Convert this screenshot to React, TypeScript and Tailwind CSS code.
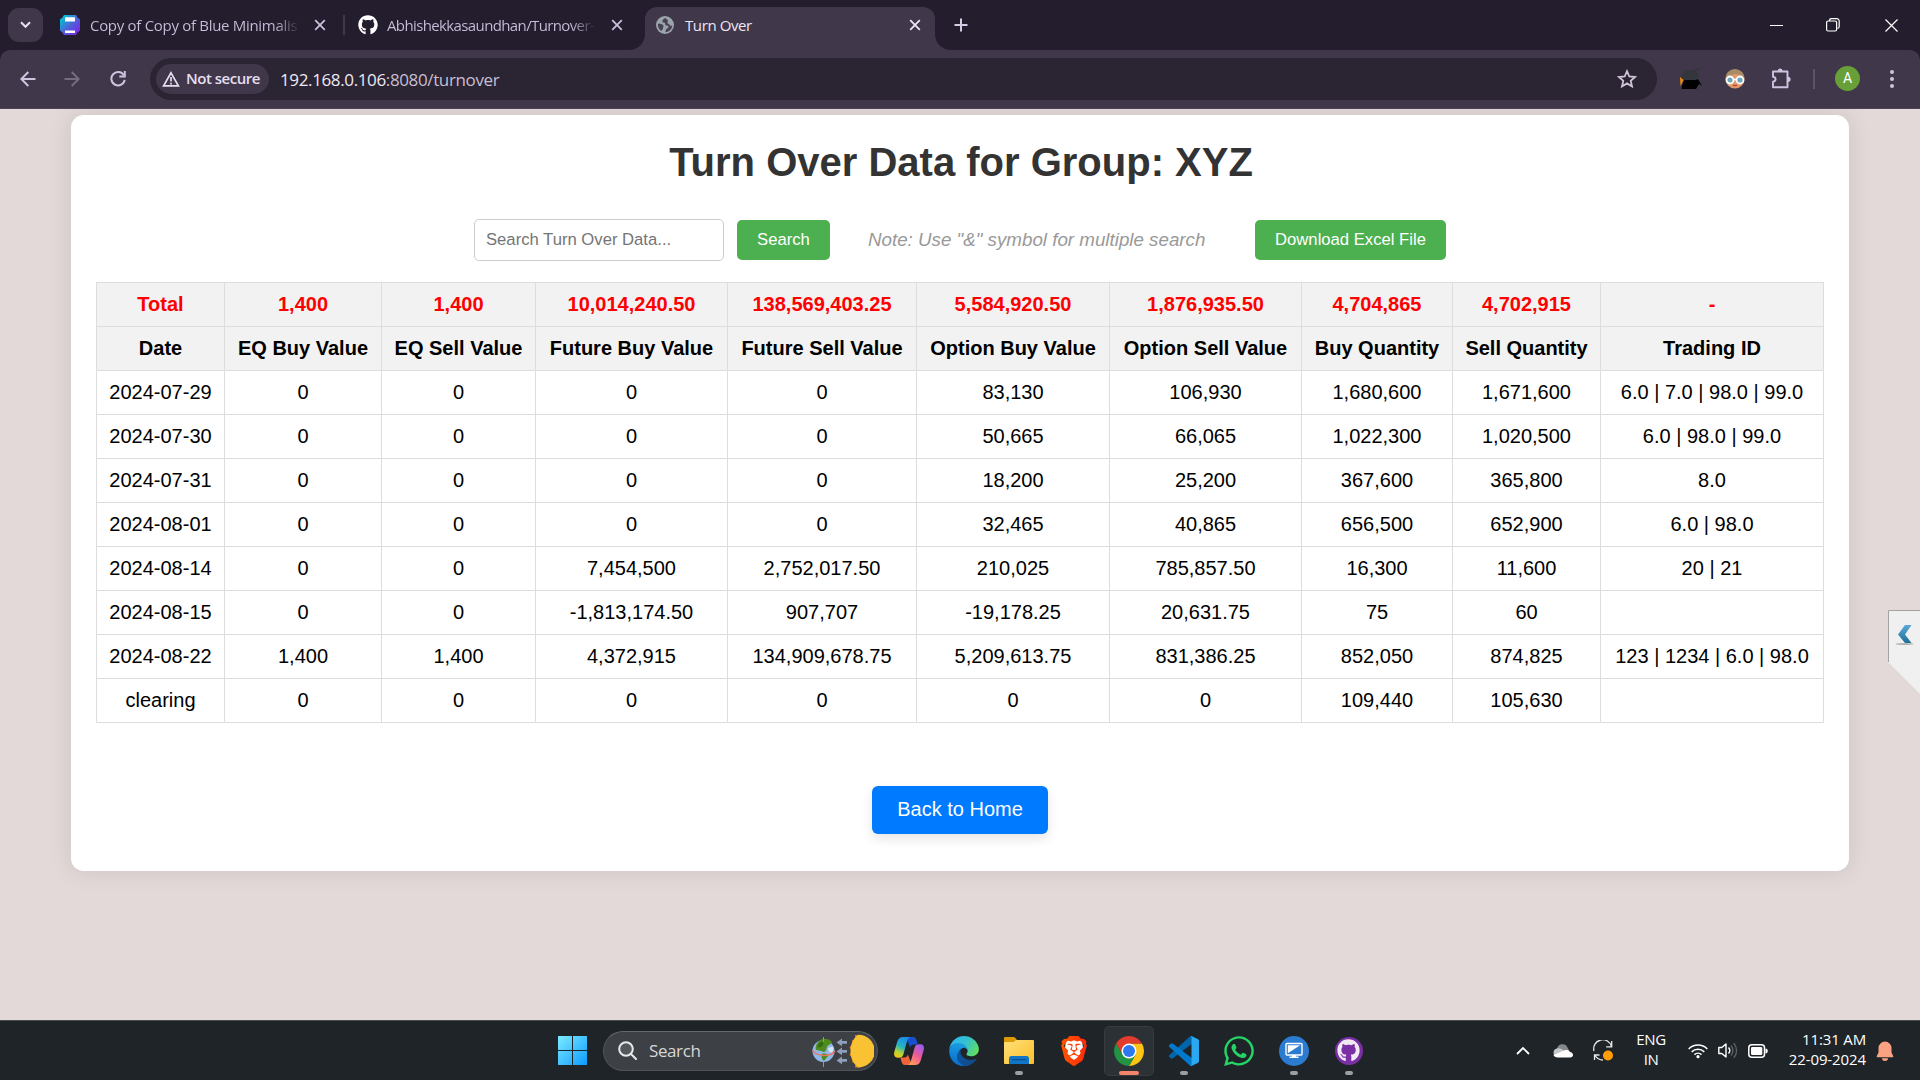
import React from "react";
import { SiBrave } from "react-icons/si";
import { FaGithub, FaWhatsapp } from "react-icons/fa";

const columns = [
  "Date",
  "EQ Buy Value",
  "EQ Sell Value",
  "Future Buy Value",
  "Future Sell Value",
  "Option Buy Value",
  "Option Sell Value",
  "Buy Quantity",
  "Sell Quantity",
  "Trading ID",
];

const totals = ["Total", "1,400", "1,400", "10,014,240.50", "138,569,403.25", "5,584,920.50", "1,876,935.50", "4,704,865", "4,702,915", "-"];

const rows = [
  ["2024-07-29", "0", "0", "0", "0", "83,130", "106,930", "1,680,600", "1,671,600", "6.0 | 7.0 | 98.0 | 99.0"],
  ["2024-07-30", "0", "0", "0", "0", "50,665", "66,065", "1,022,300", "1,020,500", "6.0 | 98.0 | 99.0"],
  ["2024-07-31", "0", "0", "0", "0", "18,200", "25,200", "367,600", "365,800", "8.0"],
  ["2024-08-01", "0", "0", "0", "0", "32,465", "40,865", "656,500", "652,900", "6.0 | 98.0"],
  ["2024-08-14", "0", "0", "7,454,500", "2,752,017.50", "210,025", "785,857.50", "16,300", "11,600", "20 | 21"],
  ["2024-08-15", "0", "0", "-1,813,174.50", "907,707", "-19,178.25", "20,631.75", "75", "60", ""],
  ["2024-08-22", "1,400", "1,400", "4,372,915", "134,909,678.75", "5,209,613.75", "831,386.25", "852,050", "874,825", "123 | 1234 | 6.0 | 98.0"],
  ["clearing", "0", "0", "0", "0", "0", "0", "109,440", "105,630", ""],
];

const columnWidths = [128, 157, 154, 192, 189, 193, 192, 151, 148, 223];

function TabClose({ color }: { color: string }) {
  return (
    <svg width="12" height="12" viewBox="0 0 12 12" className="shrink-0" stroke={color} strokeWidth="1.8">
      <path d="M1.2 1.2l9.6 9.6M10.8 1.2l-9.6 9.6" />
    </svg>
  );
}

function CanvaIcon() {
  return (
    <svg width="20" height="20" viewBox="0 0 20 20" className="shrink-0">
      <defs>
        <linearGradient id="canva" x1="0" y1="0" x2="1" y2="1">
          <stop offset="0.1" stopColor="#04c2d2" />
          <stop offset="0.5" stopColor="#4a66d8" />
          <stop offset="1" stopColor="#8a17ee" />
        </linearGradient>
      </defs>
      <path d="M4 0h12l1.500 2.500L20 4.500v11L17.500 17.500 16 20H4l-1.500-2.500L0 15.500v-11L2.500 2.500z" fill="url(#canva)" />
      <rect x="5" y="2.200" width="10" height="4.300" rx="0.5" fill="#fff" />
      <rect x="5" y="15.500" width="10" height="2.500" rx="0.5" fill="#fff" />
    </svg>
  );
}

function GlobeIcon() {
  return (
    <svg width="18" height="18" viewBox="0 0 18 18" className="shrink-0">
      <circle cx="9" cy="9" r="9" fill="#9aa5ab" />
      <path
        d="M9.600 1.900C7.500 2.500 6.800 3.600 6.500 4.700c-.3 1 .1 1.800 1.200 1.900 1.100.1 1.500.6 1.500 1.500 0 1.100.6 1.500 1.700 1.500 1.600 0 2 .7 1.300 1.800-.6 1-1.500 1.200-2.300 2.300-.5.8-.4 1.800-.1 2.600 3.400-.3 6.300-3.200 6.500-6.700-1 .5-2.100.2-2.500-.7-.4-1-1.300-1-1.900-1.500-.8-.8-.2-1.700.1-2.400.3-.9-.7-1.600-1.400-1.800z"
        fill="#4a4254"
      />
      <path d="M1.900 7.800c1.700-.2 4.300.1 5.200 1.200 1 1.200-.1 2.300-.2 3.600-.1.900-.9 1.600-1.600 2.400C3 13.700 1.600 10.800 1.900 7.800z" fill="#4a4254" />
    </svg>
  );
}

function TabStrip() {
  return (
    <div className="flex h-[50px] items-center bg-[#241d2e] pl-2 text-[15px] tracking-[-0.3px]">
      <div className="flex h-[34px] w-[35px] shrink-0 items-center justify-center rounded-[11px] bg-[#40374b]">
        <svg width="11" height="8" viewBox="0 0 11 8" fill="none" stroke="#e6dff0" strokeWidth="2">
          <path d="M1 1.300l4.500 4.500L10 1.300" />
        </svg>
      </div>
      <div className="ml-[17px] flex w-[266px] shrink-0 items-center">
        <CanvaIcon />
        <span className="ml-[10px] w-[210px] overflow-hidden bg-linear-to-r from-[#cabfdc] from-88% to-transparent bg-clip-text whitespace-nowrap text-transparent">
          Copy of Copy of Blue Minimalis
        </span>
        <span className="ml-[14px] flex">
          <TabClose color="#cabfdc" />
        </span>
      </div>
      <div className="ml-[17px] h-5 w-[2px] shrink-0 bg-[#40374b]" />
      <div className="ml-[13px] flex w-[265px] shrink-0 items-center">
        <FaGithub className="size-[20px] shrink-0 text-white" />
        <span className="ml-[9px] w-[210px] overflow-hidden bg-linear-to-r from-[#cabfdc] from-88% to-transparent bg-clip-text tracking-[-0.62px] whitespace-nowrap text-transparent">
          Abhishekkasaundhan/Turnover-
        </span>
        <span className="ml-[15px] flex">
          <TabClose color="#cabfdc" />
        </span>
      </div>
      <div className="relative ml-[22px] flex h-[43px] w-[290px] shrink-0 items-center self-end rounded-t-[12px] bg-[#40374b] pb-[7px] pl-[11px]">
        <svg width="16" height="16" viewBox="0 0 16 16" className="absolute bottom-0 -left-4" fill="#40374b">
          <path d="M16 0v16H0C9 16 16 9 16 0z" />
        </svg>
        <svg width="16" height="16" viewBox="0 0 16 16" className="absolute -right-4 bottom-0" fill="#40374b">
          <path d="M0 0v16h16C7 16 0 9 0 0z" />
        </svg>
        <GlobeIcon />
        <span className="ml-[11px] w-[224px] tracking-[-0.4px] text-[#ece6f4]">Turn Over</span>
        <TabClose color="#ece6f4" />
      </div>
      <svg width="14" height="14" viewBox="0 0 14 14" className="ml-[19px]" stroke="#d6cbe6" strokeWidth="2">
        <path d="M7 0.500v13M0.500 7h13" />
      </svg>
      <div className="ml-auto flex items-center pr-[22px]">
        <div className="h-px w-[13px] bg-white" />
        <svg width="14" height="14" viewBox="0 0 14 14" className="ml-[43px]" fill="none" stroke="#fff" strokeWidth="1.200">
          <rect x="0.600" y="3" width="10" height="10" rx="1.500" />
          <path d="M3.500 3V2.500A1.800 1.800 0 0 1 5.300 0.700h5.400a2.500 2.500 0 0 1 2.500 2.500v5.400a1.800 1.800 0 0 1-1.800 1.800" />
        </svg>
        <svg width="13" height="13" viewBox="0 0 13 13" className="ml-[45px]" stroke="#fff" strokeWidth="1.200">
          <path d="M0.500 0.500l12 12M12.500 0.500l-12 12" />
        </svg>
      </div>
    </div>
  );
}

function Toolbar() {
  return (
    <div className="bg-[#241d2e]">
      <div className="flex h-[59px] items-center rounded-t-[10px] border-b border-[#4d4351] bg-[#40374b] pr-[26px] pb-px pl-5">
        <svg width="16" height="16" viewBox="0 0 16 16" fill="none" stroke="#cfc4e0" strokeWidth="2">
          <path d="M15.500 8H1.500M8.300 1L1.400 8l6.900 7" />
        </svg>
        <svg width="16" height="16" viewBox="0 0 16 16" className="ml-[28px]" fill="none" stroke="#756c80" strokeWidth="2">
          <path d="M0.500 8h14M7.700 1l6.900 7-6.900 7" />
        </svg>
        <svg width="16" height="18" viewBox="0 0 16 18" className="ml-[30px]" fill="none" stroke="#cfc4e0" strokeWidth="2">
          <path d="M13.800 5.200A6.700 6.700 0 1 0 14.700 9.800" />
          <path d="M14.800 1v5.500H9.300" />
        </svg>
        <div className="ml-6 flex h-[42px] w-[1507px] items-center rounded-full bg-[#2b2433] pr-[20px] pl-[6px]">
          <div className="flex h-[30px] w-[113px] items-center rounded-full bg-[#40374b] pl-[6px]">
            <svg width="18" height="16" viewBox="0 0 18 16" fill="none" stroke="#e6dff0" strokeWidth="1.700">
              <path d="M9 1.800l7.400 13H1.600z" />
              <path d="M9 6v4.500M9 11.700v1.700" />
            </svg>
            <span className="ml-[6px] text-[15px] font-semibold tracking-[-0.5px] whitespace-nowrap text-[#e6dff0]">Not secure</span>
          </div>
          <span className="ml-[11px] pt-[2px] text-[17px] tracking-[-0.37px] whitespace-nowrap text-[#c7bfd0]">
            <span className="text-[#eee9f4]">192.168.0.106</span>:8080/turnover
          </span>
          <svg width="20" height="19" viewBox="0 0 20 19" className="ml-auto" fill="none" stroke="#cfc4d8" strokeWidth="1.800">
            <path d="M10 2.200l2.300 5.300 5.700.5-4.300 3.800 1.300 5.600-5-3-5 3 1.300-5.600L2 8l5.700-.5z" />
          </svg>
        </div>
        <svg width="22" height="21" viewBox="0 0 22 21" className="ml-[23px]">
          <path d="M4 2.500c3-2 4 .5 8 0 3-.5 6-3.500 9-1.500l-.5 1.500c-3-1-3 1-6 2H17l1.500 4L16 12H3.500L0 9l3-3 .5-1.500c2-1 .5-1 .5-2z" fill="#33363a" />
          <path d="M0 9l3.500 3-3 6z" fill="#f08a10" />
          <path d="M4 12h12l2-1 4 7-3-2-3 5H2c-1-1 0-2 0-3z" fill="#000" />
        </svg>
        <svg width="20" height="20" viewBox="0 0 20 20" className="ml-[23px]">
          <circle cx="10" cy="10" r="9.500" fill="#e0986c" />
          <path d="M.5 9.500A9.500 9.500 0 0 1 19.500 9.500C16 7 14 5 9 5 6 7 3 8 .5 9.500z" fill="#a98c66" />
          <circle cx="5" cy="11" r="3.500" fill="#6fa6b5" stroke="#fff" strokeWidth="1.800" />
          <circle cx="15" cy="11" r="3.500" fill="#6fa6b5" stroke="#fff" strokeWidth="1.800" />
          <path d="M8.500 10.500h3" stroke="#fff" strokeWidth="1.500" />
          <path d="M8 16.500h4" stroke="#b8452f" strokeWidth="1.300" />
        </svg>
        <svg width="21" height="21" viewBox="0 0 21 21" className="ml-[26px]">
          <path
            d="M2 3.500h14.500v15.700H2v-5.400c3.400-.5 3.400-4.500 0-5z"
            fill="none"
            stroke="#cfc4e0"
            strokeWidth="1.900"
            strokeLinejoin="round"
          />
          <path d="M6.700 3a2.500 2.500 0 0 1 5 0zM17 8.700a2.600 2.600 0 0 1 0 5.200z" fill="#cfc4e0" />
        </svg>
        <div className="ml-[21px] h-5 w-[2px] bg-[#5d5369]" />
        <div className="ml-5 flex size-[25px] items-center justify-center rounded-full bg-[#689f38] font-[Roboto] text-[14px] text-white">A</div>
        <svg width="4" height="18" viewBox="0 0 4 18" className="ml-auto" fill="#cfc4e0">
          <circle cx="2" cy="2" r="2" />
          <circle cx="2" cy="9" r="2" />
          <circle cx="2" cy="16" r="2" />
        </svg>
      </div>
    </div>
  );
}

function TurnoverPage() {
  return (
    <div className="relative flex-1 overflow-hidden bg-[#e2d9d8] px-[71px] pt-[6px] font-['Liberation_Sans',sans-serif]">
      <div className="flex h-[756px] flex-col items-center rounded-[12.500px] bg-white px-[25px] shadow-[0_0_25px_rgba(0,0,0,0.1)]">
        <h1 className="mt-[24px] pl-[2px] text-[40px] leading-[46px] font-bold text-[#333]">Turn Over Data for Group: XYZ</h1>
        <div className="mt-[34px] flex h-[42px] items-center text-[16.667px]">
          <input
            type="text"
            placeholder="Search Turn Over Data..."
            className="h-[42px] w-[250px] rounded-[5px] border border-[#ccc] px-[11px] placeholder:text-[#757575]"
          />
          <button className="ml-[13px] h-10 w-[93px] rounded-[5px] bg-[#4caf50] pb-[2px] text-white">Search</button>
          <span className="ml-[38px] w-[337px] text-[18.750px] whitespace-nowrap text-[#999] italic">
            Note: Use "&amp;" symbol for multiple search
          </span>
          <button className="ml-[50px] h-10 w-[191px] rounded-[5px] bg-[#4caf50] pb-[2px] text-white">Download Excel File</button>
        </div>
        <table className="mt-[21px] w-[1728px] table-fixed border-collapse text-center text-[20px] leading-[23px] text-black">
          <colgroup>
            {columnWidths.map((w, i) => (
              <col key={i} style={{ width: w }} />
            ))}
          </colgroup>
          <thead className="bg-[#f2f2f2]">
            <tr className="h-[44px] text-[#f00]">
              {totals.map((v, i) => (
                <th key={i} className="border border-[#ddd] p-0 whitespace-nowrap">
                  {v}
                </th>
              ))}
            </tr>
            <tr className="h-[44px]">
              {columns.map((v) => (
                <th key={v} className="border border-[#ddd] p-0 whitespace-nowrap">
                  {v}
                </th>
              ))}
            </tr>
          </thead>
          <tbody>
            {rows.map((row) => (
              <tr key={row[0]} className="h-[44px]">
                {row.map((v, i) => (
                  <td key={i} className="border border-[#ddd] p-0 whitespace-nowrap">
                    {v}
                  </td>
                ))}
              </tr>
            ))}
          </tbody>
        </table>
        <button className="mt-[63px] h-12 w-[176px] rounded-[6px] bg-[#007bff] pb-[2px] text-[20px] text-white shadow-[0_5px_12px_rgba(0,0,0,0.1)]">
          Back to Home
        </button>
      </div>
      <svg width="32" height="84" viewBox="0 0 32 84" className="absolute top-[501px] right-0">
        <defs>
          <linearGradient id="arrow" x1="0" y1="0" x2="0" y2="1">
            <stop offset="0" stopColor="#5aa9da" />
            <stop offset="1" stopColor="#1f6f9b" />
          </linearGradient>
        </defs>
        <path d="M0 0h32v84L0 52z" fill="#f0f0f0" />
        <path d="M0.500 52V0.500H32" fill="none" stroke="#a3a3a3" />
        <ellipse cx="16.500" cy="34" rx="9" ry="1" fill="#b5b5b5" />
        <path d="M17 15h6.500l-6.500 9.500 6.500 8.500H17l-7-8.500z" fill="url(#arrow)" />
      </svg>
    </div>
  );
}

function WindowsIcon() {
  return (
    <svg width="29" height="29" viewBox="0 0 29 29" className="shrink-0">
      <defs>
        <linearGradient id="win" x1="0" y1="0" x2="1" y2="1" gradientUnits="objectBoundingBox">
          <stop offset="0" stopColor="#7cecff" />
          <stop offset="1" stopColor="#0c9aff" />
        </linearGradient>
      </defs>
      <path d="M0 .5Q0 0 .5 0H14v14H0zM15 0h13.500q.5 0 .5.500V14H15zM0 15h14v14H.5Q0 29 0 28.500zM15 15h14v13.500q0 .5-.5.500H15z" fill="url(#win)" />
    </svg>
  );
}

function EquinoxArt() {
  return (
    <svg width="63" height="34" viewBox="0 0 63 34" className="shrink-0">
      <circle cx="12.500" cy="17" r="11" fill="#8fb8e8" />
      <path d="M8 7c3-3 10-3 13 1-1 3-4 2-5 5-1 2 0 4-3 5-3-1-5-2-8-2-1-4 1-7 3-9zM11 20c3-1 6 0 6 2-1 2-3 3-4 5-2-1-3-5-2-7z" fill="#4f8a1e" />
      <path d="M10 8c2-1 3 1 2 3s-4 3-5 2 1-4 3-5z" fill="#356b12" />
      <path d="M17 14c2 0 3-2 5-1 1 2 0 5-2 6-2-1-3-3-3-5z" fill="#d6e6fa" />
      <path d="M1.500 16c3 6 17 8 22.500 1" fill="none" stroke="#f2705c" strokeWidth="1.300" />
      <path d="M12.500 3v5M12.500 28v5" stroke="#f2705c" strokeWidth="1" />
      <path d="M31 7v-2.500l-5.500 3.900 5.500 3.800V9.800h5V7zM31 16v-2.500l-5.500 3.900 5.500 3.800v-2.400h5V16zM31 25v-2.500l-5.500 3.900 5.500 3.800v-2.400h5V25z" fill="#8d9fba" />
      <path d="M49 1h-5l.5 4-3.500 1.500L42 10l-3.500 3L40.500 17l-2 4L42 24l-1 4 3.500 1.500L44 33.500h5z" fill="#e8801a" />
      <path d="M47.500 .8a16.200 16.200 0 0 1 0 32.600C41 29 39.500 22 39.500 17S41 5 47.500.8z" fill="#f9c232" />
    </svg>
  );
}

function CopilotIcon() {
  return (
    <svg width="30" height="28" viewBox="0 0 30 28">
      <defs>
        <linearGradient id="cpA" x1="0.600" y1="0" x2="0.200" y2="1">
          <stop offset="0" stopColor="#1b8fe8" />
          <stop offset="0.450" stopColor="#25b5c4" />
          <stop offset="0.750" stopColor="#b8d432" />
          <stop offset="1" stopColor="#f5c216" />
        </linearGradient>
        <linearGradient id="cpB" x1="0.800" y1="0" x2="0.200" y2="1">
          <stop offset="0" stopColor="#9a5cf0" />
          <stop offset="0.500" stopColor="#ee5a98" />
          <stop offset="1" stopColor="#ffa052" />
        </linearGradient>
      </defs>
      <path d="M12 0h7c2.500 0 3 2 3.700 4l1 3.500h-4c-2 0-3 1-3.600 3L14 5z" fill="#1750d0" />
      <path d="M18 28h-7c-2.500 0-3-2-3.700-4l-1-3.500h4c2 0 3-1 3.600-3L16 23z" fill="#f0633a" />
      <path d="M9 0h7c-2 1-2.800 3.500-3.500 6l-3 11c-.8 2.800-2 3.700-4.500 3.700H3.500C.5 20.700-.4 18 .3 15l3-10.500C4.200 1.500 6 0 9 0z" fill="url(#cpA)" />
      <path d="M21 28h-7c2-1 2.800-3.500 3.500-6l3-11c.8-2.800 2-3.700 4.500-3.700h1.500c3 0 3.900 2.700 3.200 5.700l-3 10.500C25.800 26.500 24 28 21 28z" fill="url(#cpB)" />
    </svg>
  );
}

function EdgeIcon() {
  return (
    <svg width="30" height="30" viewBox="4 0 257 259">
      <defs>
        <linearGradient id="edA" x1="0" y1="0" x2="1" y2="0.600">
          <stop offset="0" stopColor="#0c59a4" />
          <stop offset="1" stopColor="#114a8b" />
        </linearGradient>
        <linearGradient id="edB" x1="0.600" y1="0" x2="0.400" y2="1">
          <stop offset="0" stopColor="#1ba0e2" />
          <stop offset="1" stopColor="#0a6ccc" />
        </linearGradient>
        <linearGradient id="edC" x1="0" y1="0.300" x2="1" y2="0.700">
          <stop offset="0" stopColor="#2fb4ee" />
          <stop offset="0.500" stopColor="#35c1cf" />
          <stop offset="1" stopColor="#62e05a" />
        </linearGradient>
      </defs>
      <path
        fill="url(#edA)"
        d="M235.68 195.46a93.73 93.73 0 0 1-10.54 4.71 101.87 101.87 0 0 1-35.9 6.46c-47.32 0-88.54-32.55-88.54-74.32A31.48 31.48 0 0 1 117.13 105c-42.8 1.8-53.8 46.4-53.8 72.53 0 73.88 68.09 81.37 82.76 81.37 7.91 0 19.84-2.3 27-4.56l1.310-.44a128.34 128.34 0 0 0 66.6-52.8 4 4 0 0 0-5.320-5.640z"
      />
      <path
        fill="url(#edB)"
        d="M110.34 246.34A79.2 79.2 0 0 1 87.6 225a80.72 80.72 0 0 1 29.53-120c3.12-1.47 8.45-4.13 15.54-4a32.35 32.35 0 0 1 25.69 13 31.88 31.88 0 0 1 6.36 18.66c0-.21 24.46-79.6-80-79.6-43.9 0-80 41.66-80 78.21a130.15 130.15 0 0 0 12.11 56 128 128 0 0 0 156.38 67.11 75.55 75.55 0 0 1-62.78-8z"
      />
      <path
        fill="url(#edC)"
        d="M156.94 153.78c-.81 1.05-3.3 2.5-3.3 5.66 0 2.61 1.7 5.12 4.72 7.23 14.38 10 41.49 8.68 41.56 8.68a59.56 59.56 0 0 0 30.27-8.35 61.38 61.38 0 0 0 30.43-52.88c.26-22.41-8-37.31-11.34-43.91C228.09 28.76 182.35.25 132.61.25a128 128 0 0 0-128 126.2c.48-36.54 36.8-66.05 80-66.05 3.5 0 23.46.34 42 10.07 16.34 8.58 24.9 18.94 30.85 29.21 6.18 10.67 7.28 24.15 7.28 29.52s-2.74 13.33-7.8 20z"
      />
    </svg>
  );
}

function FolderIcon() {
  return (
    <svg width="30" height="27" viewBox="0 0 30 27">
      <defs>
        <linearGradient id="fold" x1="0" y1="0" x2="1" y2="1">
          <stop offset="0" stopColor="#ffdf7a" />
          <stop offset="1" stopColor="#fcbf2a" />
        </linearGradient>
      </defs>
      <path d="M0 1q0-1 1-1h8.500q1 0 1.700.7L13 3v6H0z" fill="#dc9a06" />
      <path d="M0 6q0-1 1-1h8.500L12 3h17q1 0 1 1v22q0 1-1 1H1q-1 0-1-1z" fill="url(#fold)" />
      <path d="M5 27v-5.500Q5 19 7.500 19h15q2.500 0 2.500 2.500V27z" fill="#0f76c8" />
      <path d="M8.500 22.700h13" stroke="#0a4f8d" strokeWidth="1.300" strokeLinecap="round" />
    </svg>
  );
}

function BraveIcon() {
  return (
    <>
      <svg width="30" height="30" viewBox="0 0 30 30" className="absolute">
        <defs>
          <linearGradient id="brave" x1="0" y1="0" x2="1" y2="0">
            <stop offset="0" stopColor="#ff5500" />
            <stop offset="1" stopColor="#ff2a0a" />
          </linearGradient>
        </defs>
        <path d="M7 4h16l1.500 12-9.500 9.500L5.500 16z" fill="#fff" />
      </svg>
      <SiBrave size={30} className="relative fill-[url(#brave)]" />
    </>
  );
}

function ChromeIcon() {
  return (
    <svg width="30" height="30" viewBox="0 0 48 48">
      <path d="M24 12h20.780A24 24 0 0 1 24 48l10.400-18z" fill="#fcc515" />
      <path d="M3.220 12A24 24 0 0 1 44.780 12H24L13.600 30z" fill="#e33b2e" />
      <path d="M3.220 12L13.600 30l20.800 0L24 48A24 24 0 0 1 3.220 12z" fill="#229342" />
      <circle cx="24" cy="24" r="12" fill="#fff" />
      <circle cx="24" cy="24" r="9.600" fill="#2b78f0" />
    </svg>
  );
}

function VSCodeIcon() {
  return (
    <svg width="30" height="30" viewBox="0 0 100 100">
      <path d="M96.500 10.800L75.900.9a6.200 6.200 0 0 0-7.100 1.200L1.300 63.600a4.200 4.200 0 0 0 0 6.200l5.500 5a4.200 4.200 0 0 0 5.300.2L93.400 13.400a4.100 4.100 0 0 1 6.600 3.300v-.3a6.200 6.200 0 0 0-3.500-5.600z" fill="#0065a9" />
      <path d="M96.500 89.200l-20.600 9.900a6.200 6.200 0 0 1-7.100-1.200L1.300 36.400a4.200 4.200 0 0 1 0-6.200l5.500-5a4.200 4.200 0 0 1 5.300-.2l81.300 61.600a4.100 4.100 0 0 0 6.600-3.300v.3a6.200 6.200 0 0 1-3.500 5.600z" fill="#007acc" />
      <path d="M75.900 99.100a6.200 6.200 0 0 1-7.100-1.200c2.300 2.300 6.200.7 6.200-2.600V4.700c0-3.300-3.900-4.900-6.200-2.600A6.200 6.200 0 0 1 75.900.9l20.600 9.900a6.200 6.200 0 0 1 3.500 5.600v67.200a6.200 6.200 0 0 1-3.500 5.600z" fill="#2aa9f2" />
    </svg>
  );
}

function RemoteDesktopIcon() {
  return (
    <svg width="30" height="30" viewBox="0 0 30 30">
      <circle cx="15" cy="15" r="15" fill="#2b7bd0" />
      <rect x="7" y="7.500" width="16" height="11.500" rx="1" fill="#2b7bd0" stroke="#fff" strokeWidth="1.400" />
      <path d="M8.800 9.300h12.400L8.800 17.300z" fill="#fff" />
      <path d="M13 19h4v1.500h2.500V22h-9v-1.500H13z" fill="#fff" />
    </svg>
  );
}

function TaskItem({ children, running }: { children: React.ReactNode; running?: boolean }) {
  return (
    <div className="relative flex h-[50px] w-[55px] shrink-0 items-center justify-center">
      {children}
      {running && <span className="absolute bottom-[1px] left-1/2 h-[4px] w-2 -translate-x-1/2 rounded-full bg-[#9b9fa2]" />}
    </div>
  );
}

function Taskbar() {
  return (
    <div className="flex h-[60px] shrink-0 items-center border-t border-[#4b4e50] bg-[#1e2428] pl-[558px] text-[#fff]">
      <WindowsIcon />
      <div className="ml-4 flex h-10 w-[275px] shrink-0 items-center rounded-full border border-[#505357] border-t-[#64676b] bg-[#3d4045] pr-[3px] pl-[14px]">
        <svg width="19" height="19" viewBox="0 0 19 19" fill="none" stroke="#e9e9ea" strokeWidth="2">
          <circle cx="8" cy="8" r="6.800" fill="#54575b" />
          <path d="M13 13l5 5" strokeLinecap="round" />
        </svg>
        <span className="ml-[12px] text-[17px] tracking-[-0.4px] text-[#d6d7d9]">Search</span>
        <span className="ml-auto">
          <EquinoxArt />
        </span>
      </div>
      <div className="ml-[3px] flex items-center">
        <TaskItem>
          <CopilotIcon />
        </TaskItem>
        <TaskItem>
          <EdgeIcon />
        </TaskItem>
        <TaskItem running>
          <FolderIcon />
        </TaskItem>
        <TaskItem>
          <BraveIcon />
        </TaskItem>
        <div className="relative mx-[2.500px] flex size-[50px] items-center justify-center rounded-[5px] border border-[#363b3f] bg-[#2c3135]">
          <ChromeIcon />
          <span className="absolute bottom-0 left-[14px] h-[4px] w-5 rounded-full bg-[#f4836b]" />
        </div>
        <TaskItem running>
          <VSCodeIcon />
        </TaskItem>
        <TaskItem>
          <FaWhatsapp className="size-[34px] text-[#25d366]" />
        </TaskItem>
        <TaskItem running>
          <RemoteDesktopIcon />
        </TaskItem>
        <TaskItem running>
          <span className="flex size-7 items-center justify-center rounded-full bg-[#7b2fa5]">
            <FaGithub className="size-[23px] text-[#f1eaf5]" />
          </span>
        </TaskItem>
      </div>
      <div className="ml-auto flex items-center pr-[26px] text-[15px] leading-5">
        <svg width="14" height="9" viewBox="0 0 14 9" fill="none" stroke="#fff" strokeWidth="1.800">
          <path d="M1 8l6-6 6 6" />
        </svg>
        <svg width="20" height="14" viewBox="0 0 20 14" className="ml-[23px]">
          <path d="M4 5a5.500 5.500 0 0 1 10.500-1.500L17 8H6z" fill="#85888b" />
          <path d="M4.500 13A4.300 4.300 0 0 1 4 4.500c3-.5 5 .5 7 2.500l4 6z" fill="#c4c6c8" />
          <path d="M4.500 13.500C2.500 13.500 1 12.500.5 11L11 6.500c2-1 5-.5 5.800 1.500 2 .2 3.200 1.500 3.200 3 0 1.400-1.200 2.500-2.800 2.500z" fill="#fff" />
        </svg>
        <svg width="21" height="21" viewBox="0 0 21 21" className="ml-[20px]" fill="none" stroke="#e8e8e8" strokeWidth="1.300">
          <path d="M1 11A9 9 0 0 1 18.500 6.500M18.700 1v5.800h-5.500M1.500 20v-5h5M2 15.500a9.500 9.500 0 0 0 8 4.500" />
          <circle cx="15" cy="15.500" r="5" fill="#ff9d0a" stroke="none" />
        </svg>
        <div className="ml-[21px] w-[32px] pb-[3px] text-center tracking-[-0.4px]">
          <div>ENG</div>
          <div>IN</div>
        </div>
        <svg width="20" height="16" viewBox="0 0 20 16" className="ml-[21px]" fill="none" stroke="#fff" strokeWidth="1.500">
          <path d="M.7 6a13 13 0 0 1 18.600 0M3.700 8.900a9 9 0 0 1 12.600 0M6.500 11.600a5 5 0 0 1 7 0" />
          <circle cx="10" cy="13.700" r="1.600" fill="#fff" stroke="none" />
        </svg>
        <svg width="20" height="17" viewBox="0 0 20 17" className="ml-[10px]" fill="none" stroke="#fff" strokeWidth="1.400">
          <path d="M.8 5.500h3L8 2v13l-4.200-3.500h-3z" strokeLinejoin="round" />
          <path d="M10.500 5.500a4.500 4.500 0 0 1 0 6" />
          <path d="M13 3.500a7.500 7.500 0 0 1 0 10M15.800 1.200a11 11 0 0 1 0 14.600" stroke="#5d6164" />
        </svg>
        <svg width="20" height="14" viewBox="0 0 20 14" className="ml-[10px]">
          <rect x=".8" y=".8" width="15.700" height="12.400" rx="3" fill="none" stroke="#fff" strokeWidth="1.500" />
          <rect x="3" y="3" width="11.300" height="8" rx="1.200" fill="#fff" />
          <path d="M17.500 4.500c3 .2 3 4.800 0 5z" fill="#fff" />
        </svg>
        <div className="ml-[18px] w-[80px] pb-[4px] text-right tracking-[-0.1px] whitespace-nowrap">
          <div className="tracking-[-0.15px]">11:31 AM</div>
          <div>22-09-2024</div>
        </div>
        <svg width="18" height="20" viewBox="0 0 18 20" className="ml-[10px]" fill="#fba283">
          <path d="M9 .5a6.500 6.500 0 0 1 6.500 6.500v4.500l1.800 3.800q.3 1-.8 1H1.500q-1.100 0-.8-1l1.800-3.800V7A6.500 6.500 0 0 1 9 .5zM6 17.300h6a3 2.700 0 0 1-6 0z" />
        </svg>
      </div>
    </div>
  );
}

export default function App() {
  return (
    <div className="flex h-[1080px] w-[1920px] flex-col overflow-hidden font-['Open_Sans','Noto_Sans',sans-serif]">
      <TabStrip />
      <Toolbar />
      <TurnoverPage />
      <Taskbar />
    </div>
  );
}
